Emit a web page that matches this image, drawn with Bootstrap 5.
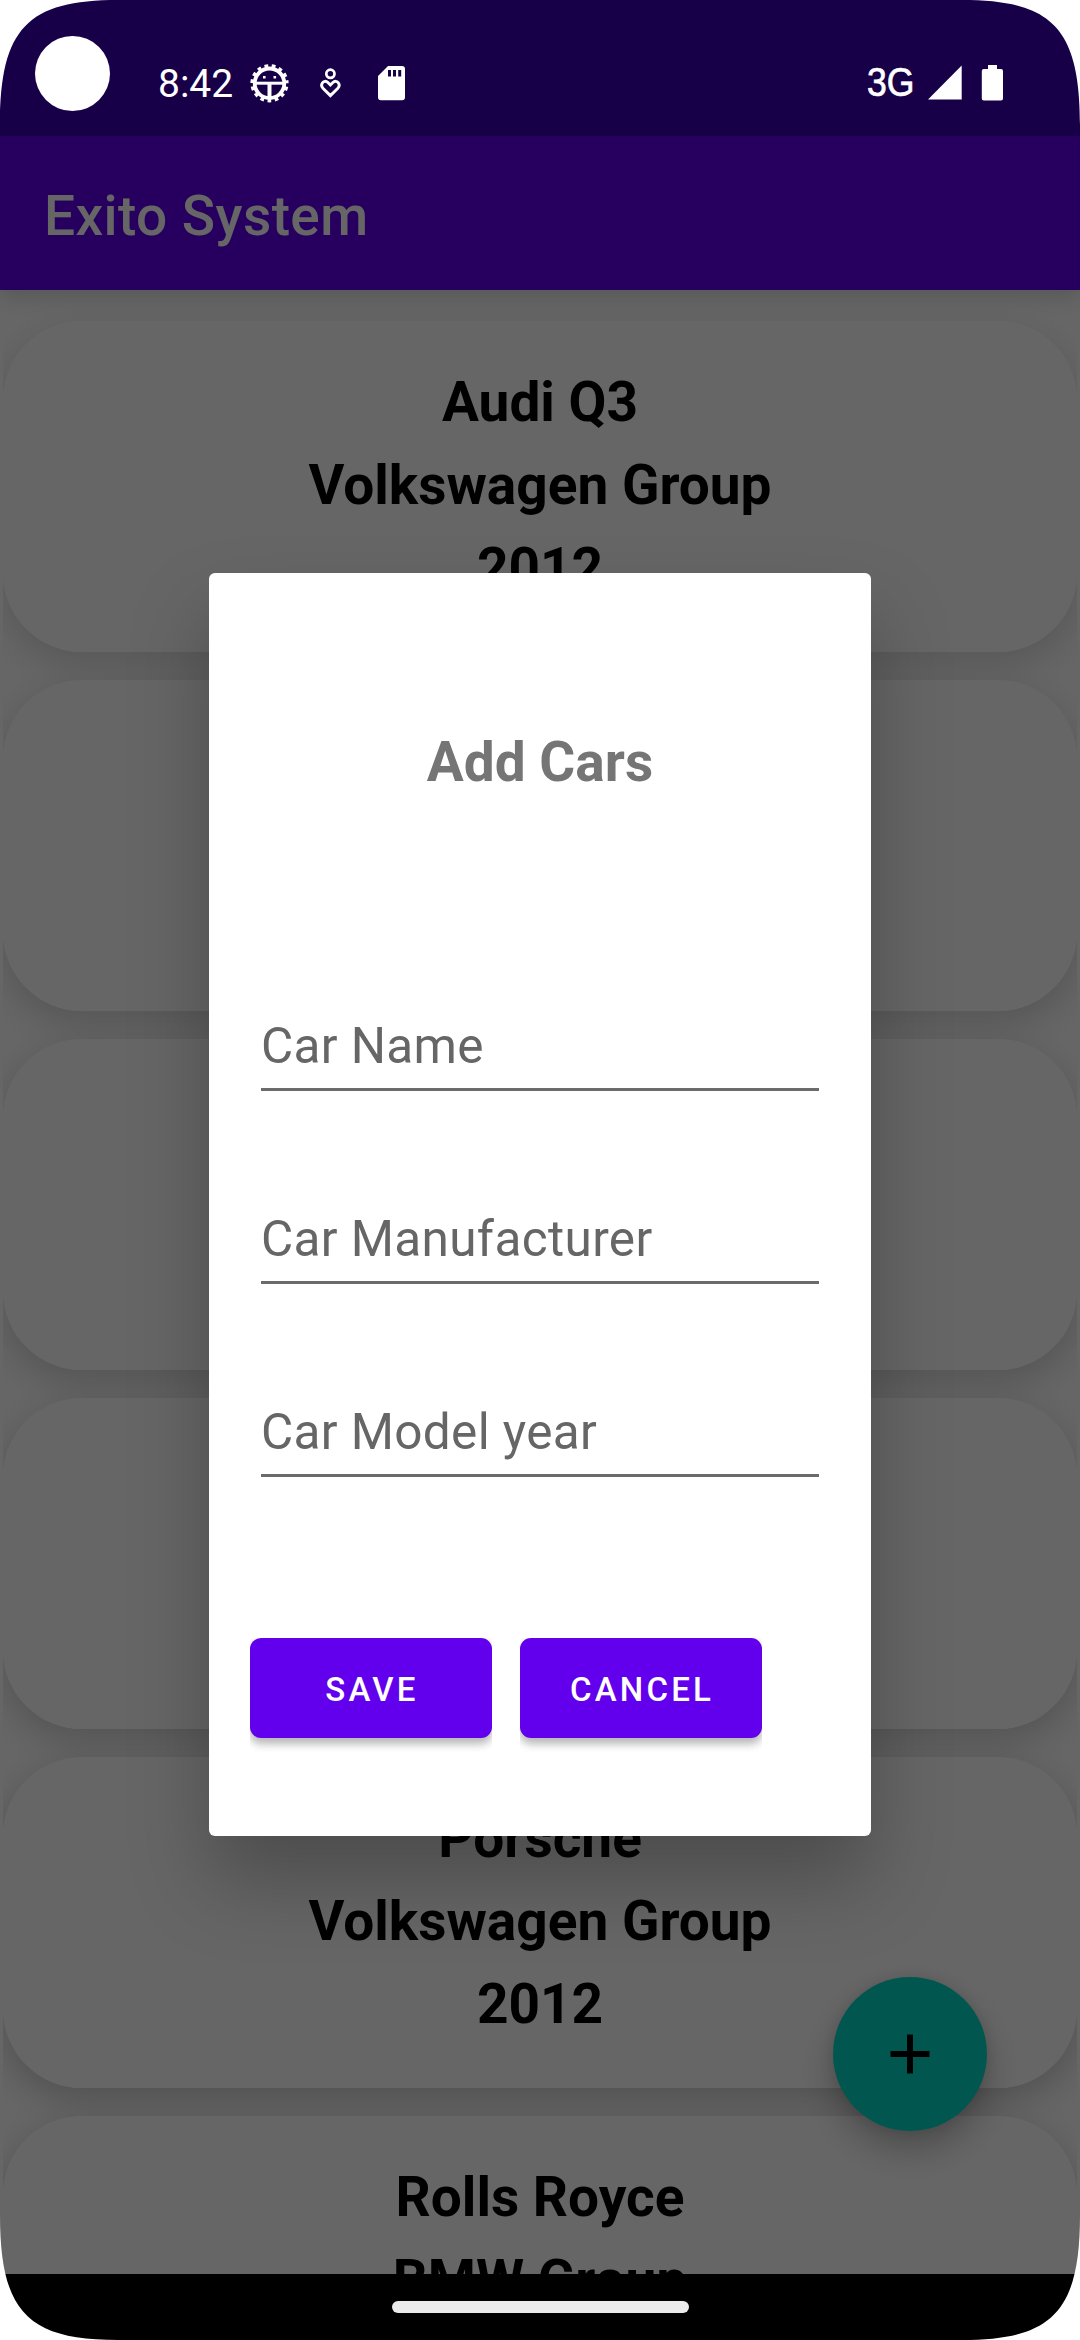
<!DOCTYPE html>
<html lang="en">
<head>
<meta charset="utf-8">
<meta name="viewport" content="width=device-width, initial-scale=1">
<title>Exito System</title>
<link href="https://cdn.jsdelivr.net/npm/bootstrap@5.3.0/dist/css/bootstrap.min.css" rel="stylesheet">
<style>
  body { font-family: Roboto, "Liberation Sans", sans-serif; background: #fff; }
  .phone { width: 1080px; height: 2340px; }
  .status-strip { height: 136px; background: #170048; z-index: 3; }
  .camera { width: 75px; height: 75px; margin: 36px 0 0 35px; }
  .clock { font-size: 39px; line-height: 46px; margin: 61px 0 0 48px; width: 76px; }
  .status-icons { height: 40px; margin: 63px 0 0 15px; }
  .network { font: 40px/46px "Liberation Sans", sans-serif; -webkit-text-stroke: .7px #fff; margin-top: 59px; width: 61px; transform: scaleX(.89); transform-origin: left; }
  .status-right { margin: 63px 76px 0 0; height: 40px; }
  .app-bar { height: 154px; background: #6200ee; padding: 0 0 0 44px; box-shadow: 0 6px 22px rgba(0,0,0,.16); z-index: 1; }
  .app-title { font-size: 55px; font-weight: 500; line-height: 64px; padding-top: 5px; letter-spacing: .42px; }
  .app-body { height: 1984px; background: #fff; }
  .car-list { margin: 0 3px; padding-top: 31px; gap: 28px; isolation: isolate; height: 1984px; }
  .car-item { height: 331px; border-radius: 79px; background: #fff; border: 0; flex: none; padding-top: 40px; font-size: 55px; line-height: 82.8px; font-weight: 700; color: #000; position: relative; }
  .car-item::before { content: ""; position: absolute; inset: 0; border-radius: inherit; z-index: -1; box-shadow: 0 12px 36px rgba(0,0,0,var(--shade)); }
  .car-item:nth-child(1) { --shade: .15; }
  .car-item:nth-child(2) { --shade: .17; }
  .car-item:nth-child(3) { --shade: .18; }
  .car-item:nth-child(4) { --shade: .19; }
  .car-item:nth-child(5) { --shade: .21; }
  .car-item:nth-child(6) { --shade: .21; }
  .fab { right: 93px; bottom: 209px; width: 154px; height: 154px; background: #03dac5; box-shadow: 0 18px 34px rgba(0,0,0,.25), 0 0 14px rgba(0,0,0,.1); }
  .scrim { top: 136px; height: 2138px; background: rgba(0,0,0,.6); z-index: 2; }
  .dialog-box { top: 573px; left: 209px; width: 662px; height: 1263px; border-radius: 6px; z-index: 4; box-shadow: 0 45px 80px rgba(0,0,0,.25); padding: 0 52px; }
  .dialog-title { font-size: 55px; line-height: 64px; font-weight: 700; color: #757575; margin: 157px 0 0; }
  .field-stack { margin-top: 222px; gap: 118px; }
  .field-stack .form-control { height: 75px; padding: 0 0 13px; border: 0; border-bottom: 3px solid #6b6b6b; border-radius: 0; font-size: 49.5px; line-height: 58px; letter-spacing: .36px; box-shadow: none; background: #fff; }
  .field-stack .form-control::placeholder { color: #666; opacity: 1; }
  .actions { gap: 28px; margin: 161px 0 0 -11px; }
  .actions .btn { width: 242px; height: 100px; border: 0; border-radius: 11px; background: #6200ee; color: #fff; font-size: 33px; font-weight: 500; letter-spacing: 3.2px; line-height: 100px; padding: 2px 0 0 2px; box-shadow: 0 6px 8px rgba(0,0,0,.25), 0 2px 14px rgba(0,0,0,.08); clip-path: inset(0 0 -20px 0); }
  .nav-strip { height: 66px; background: #000; z-index: 3; padding-top: 27px; }
  .home-pill { width: 297px; height: 12px; border-radius: 6px; background: #ebebeb; }
  .corner { width: 118px; height: 125px; z-index: 5; }
  .flip-x { transform: scaleX(-1); }
  .flip-y { transform: scaleY(-1); }
  .flip-xy { transform: scale(-1); }
</style>
<script src="https://cdn.jsdelivr.net/npm/bootstrap@5.3.0/dist/js/bootstrap.bundle.min.js"></script>
</head>
<body>
<div class="phone position-relative overflow-hidden d-flex flex-column">

  <div class="status-strip position-relative d-flex align-items-start text-white flex-shrink-0">
    <div class="camera rounded-circle bg-white"></div>
    <div class="clock">8:42</div>
    <svg class="status-icons" width="170" height="40" viewBox="249 63 170 40" fill="none" stroke="#fff">
      <circle cx="269.500" cy="83.300" r="14.800" stroke-width="3.800"/>
      <circle cx="269.500" cy="83.300" r="17.300" stroke-width="3.600" stroke-dasharray="3.700 3.547" stroke-dashoffset="3.720"/>
      <path d="M255 83.200h29" stroke-width="3"/>
      <path d="M269.500 84v14" stroke-width="4"/>
      <path d="M263 77.300h2.600M273.500 77.300h2.600" stroke-width="2.500"/>
      <circle cx="330.400" cy="73.800" r="4.100" stroke-width="2.700"/>
      <path d="M330.400 95.600l-7.200-7.100c-4-4.200.9-9.600 4.700-6l2.500 2.500 2.500-2.500c3.800-3.600 8.700 1.800 4.700 6z" stroke-width="2.900"/>
      <path d="M388 66h14a3 3 0 0 1 3 3v28.200a3 3 0 0 1-3 3h-21a3 3 0 0 1-3-3V76zM388 70v6.500h3V70zM393 70v6.500h3V70zM398.200 70v6.500h3V70z" fill="#fff" fill-rule="evenodd" stroke="none"/>
    </svg>
    <div class="network ms-auto">3G</div>
    <svg class="status-right" width="76" height="40" viewBox="928 63 76 40" fill="#fff">
      <path d="M928 99.500L961.700 65.500V99.500z"/>
      <path d="M988 69v-4h9v4h4a2 2 0 0 1 2 2v27.500a2 2 0 0 1-2 2h-17.200a2 2 0 0 1-2-2V71a2 2 0 0 1 2-2z"/>
    </svg>
  </div>

  <nav class="app-bar navbar position-relative flex-shrink-0">
    <span class="app-title text-white">Exito System</span>
  </nav>

  <main class="app-body position-relative flex-shrink-0 overflow-hidden">
    <div class="car-list d-flex flex-column text-center overflow-hidden">
      <div class="car-item"><div>Audi Q3</div><div>Volkswagen Group</div><div>2012</div></div>
      <div class="car-item"></div>
      <div class="car-item"></div>
      <div class="car-item"></div>
      <div class="car-item"><div>Porsche</div><div>Volkswagen Group</div><div>2012</div></div>
      <div class="car-item"><div>Rolls Royce</div><div>BMW Group</div></div>
    </div>
  </main>

  <button class="fab btn position-absolute rounded-circle border-0 p-0 d-flex align-items-center justify-content-center" aria-label="Add">
    <svg width="40" height="40" viewBox="0 0 40 40" stroke="#000" stroke-width="6"><path d="M20 .5v39M.5 20h39"/></svg>
  </button>

  <div class="scrim position-absolute start-0 end-0"></div>

  <section class="dialog-box position-absolute bg-white d-flex flex-column">
    <h2 class="dialog-title text-center">Add Cars</h2>
    <div class="field-stack d-flex flex-column">
      <input class="form-control" placeholder="Car Name">
      <input class="form-control" placeholder="Car Manufacturer">
      <input class="form-control" placeholder="Car Model year">
    </div>
    <div class="actions d-flex">
      <button class="btn">SAVE</button>
      <button class="btn">CANCEL</button>
    </div>
  </section>

  <footer class="nav-strip position-relative d-flex justify-content-center align-items-start flex-shrink-0">
    <div class="home-pill"></div>
  </footer>

  <svg class="corner position-absolute top-0 start-0" viewBox="0 0 118 125"><path fill="#fff" d="M0 0V125C0 28 28 0 118 0z"/></svg>
  <svg class="corner flip-x position-absolute top-0 end-0" viewBox="0 0 118 125"><path fill="#fff" d="M0 0V125C0 28 28 0 118 0z"/></svg>
  <svg class="corner flip-y position-absolute bottom-0 start-0" viewBox="0 0 118 125"><path fill="#fff" d="M0 0V125C0 28 28 0 118 0z"/></svg>
  <svg class="corner flip-xy position-absolute bottom-0 end-0" viewBox="0 0 118 125"><path fill="#fff" d="M0 0V125C0 28 28 0 118 0z"/></svg>
</div>
</body>
</html>
